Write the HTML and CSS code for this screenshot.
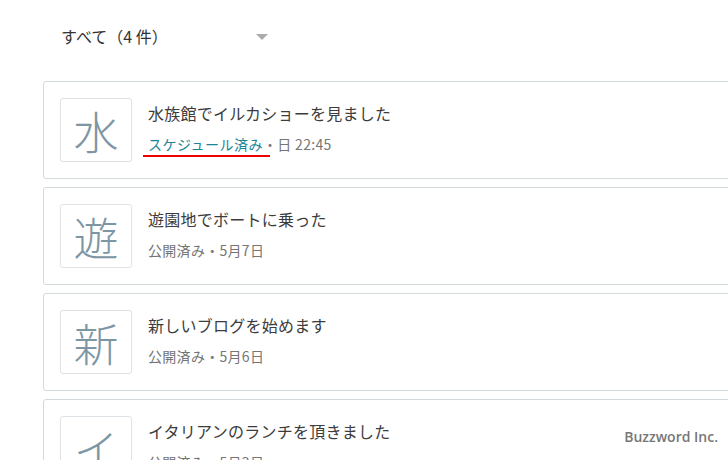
FILE: index.html
```html
<!DOCTYPE html>
<html lang="ja">
<head>
  <meta charset="UTF-8" />
  <meta name="viewport" content="width=device-width, initial-scale=1.0"/>
  <title>投稿一覧</title>
  <link rel="stylesheet" href="styles.css">
</head>
<body>

  <div class="filter">
    <span class="filter-label">すべて（4 件）</span>
    <span class="filter-arrow"></span>
  </div>

  <div class="post-list">
    <div class="post">
      <div class="thumb">水</div>
      <div class="post-body">
        <div class="post-title">水族館でイルカショーを見ました</div>
        <div class="post-meta"><span class="scheduled">スケジュール済み</span>・日 22:45</div>
      </div>
    </div>

    <div class="post">
      <div class="thumb">遊</div>
      <div class="post-body">
        <div class="post-title">遊園地でボートに乗った</div>
        <div class="post-meta">公開済み・5月7日</div>
      </div>
    </div>

    <div class="post">
      <div class="thumb">新</div>
      <div class="post-body">
        <div class="post-title">新しいブログを始めます</div>
        <div class="post-meta">公開済み・5月6日</div>
      </div>
    </div>

    <div class="post">
      <div class="thumb">イ</div>
      <div class="post-body">
        <div class="post-title">イタリアンのランチを頂きました</div>
        <div class="post-meta">公開済み・5月3日</div>
      </div>
    </div>
  </div>

  <div class="watermark">Buzzword Inc.</div>

</body>
</html>
```

FILE: styles.css
```css
body {
  margin: 0;
  font-family: "Noto Sans CJK JP", "Noto Sans", sans-serif;
  background: #fff;
  color: #3c3c3c;
  height: 460px;
  overflow: hidden;
  position: relative;
}

.filter {
  display: flex;
  align-items: center;
  justify-content: space-between;
  width: 206px;
  height: 81px;
  padding-left: 61px;
}

.filter-label {
  font-size: 16px;
  line-height: 24px;
  margin-top: -10px;
  color: #333;
}

.filter-arrow {
  width: 0;
  height: 0;
  border-left: 6px solid transparent;
  border-right: 6px solid transparent;
  border-top: 6px solid #aaa;
  margin-top: -8px;
  margin-right: -1px;
}

.post-list {
  display: flex;
  flex-direction: column;
  gap: 8px;
  margin-left: 43px;
  width: 720px;
}

.post {
  display: flex;
  gap: 16px;
  padding: 16px;
  border: 1px solid #d3dadd;
  border-radius: 3px;
}

.thumb {
  flex: none;
  width: 70px;
  height: 62px;
  border: 1px solid #dde3e6;
  border-radius: 3px;
  display: flex;
  align-items: center;
  justify-content: center;
  font-size: 45px;
  font-weight: 300;
  color: #7d96a4;
  line-height: 1;
}

.post-body {
  padding-top: 3px;
}

.post-title {
  font-size: 16px;
  line-height: 24px;
  letter-spacing: 0.25px;
  color: #3c3c3c;
}

.post-meta {
  margin-top: 9px;
  font-size: 14px;
  line-height: 20px;
  letter-spacing: 0.3px;
  color: #757575;
}

.scheduled {
  color: #1b8597;
  position: relative;
  letter-spacing: 0.5px;
}

.scheduled::after {
  content: "";
  position: absolute;
  left: -5px;
  right: -7px;
  bottom: -3px;
  height: 2px;
  background: #e00;
}

.watermark {
  position: absolute;
  right: 10px;
  bottom: 14px;
  font-family: "Open Sans", sans-serif;
  font-weight: 600;
  font-size: 14px;
  letter-spacing: 0;
  color: #777;
}
```
